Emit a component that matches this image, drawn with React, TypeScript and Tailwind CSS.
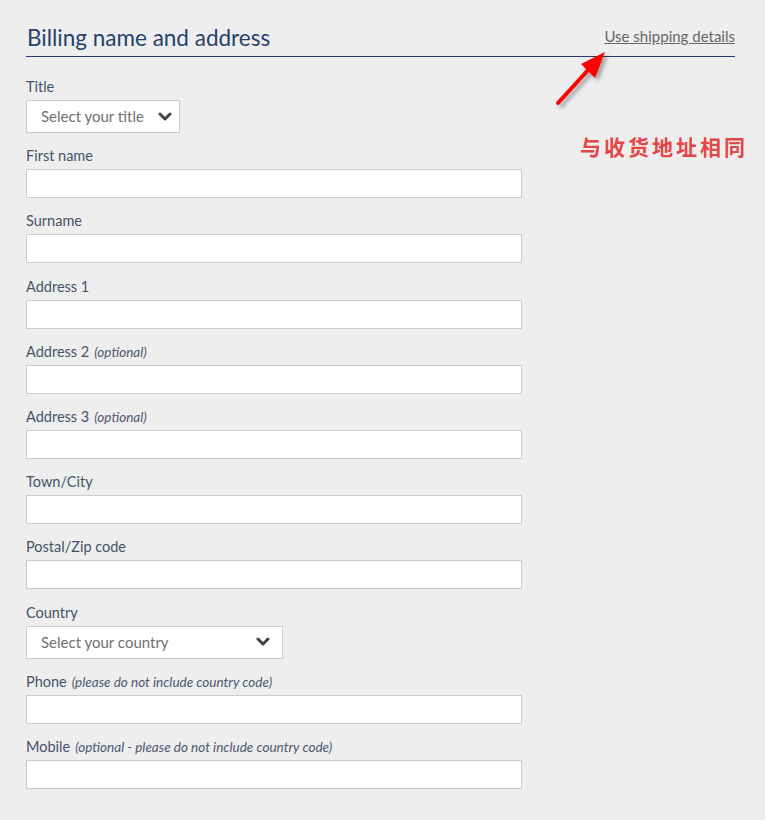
import React from 'react'

type Field = {
  label: string
  note?: string
  kind?: 'input' | 'select'
  placeholder?: string
  box?: string
}

const fields: Field[] = [
  { label: 'Title', kind: 'select', placeholder: 'Select your title', box: 'w-[154px] pr-[7px]' },
  { label: 'First name' },
  { label: 'Surname' },
  { label: 'Address 1' },
  { label: 'Address 2', note: '(optional)' },
  { label: 'Address 3', note: '(optional)' },
  { label: 'Town/City' },
  { label: 'Postal/Zip code' },
  { label: 'Country', kind: 'select', placeholder: 'Select your country', box: 'w-[257px] pr-[12px]' },
  { label: 'Phone', note: '(please do not include country code)' },
  { label: 'Mobile', note: '(optional - please do not include country code)' },
]

function Chevron() {
  return (
    <svg width="14" height="10" viewBox="0 0 14 10" className="text-[#444]">
      <polyline points="2,2 7,7 12,2" fill="none" stroke="currentColor" strokeWidth="3" strokeLinecap="round" strokeLinejoin="round" />
    </svg>
  )
}

function FormField({ f }: { f: Field }) {
  return (
    <div className="mb-[13.2px]">
      <label className="block h-5 mb-[3px] text-[14.5px] leading-5 text-[#46526a]">
        {f.label}
        {f.note && <span className="ml-[5px] text-[13.5px] italic text-[#4d5870]">{f.note}</span>}
      </label>
      {f.kind === 'select' ? (
        <div className={`${f.box} h-[33px] bg-white border border-[#cccccc] flex items-center justify-between pl-[14px]`}>
          <span className="text-[15px] text-[#707070]">{f.placeholder}</span>
          <Chevron />
        </div>
      ) : (
        <div className="w-[496px] h-[29px] bg-white border border-[#cccccc]" />
      )}
    </div>
  )
}

export default function App() {
  return (
    <div className="relative w-[765px] h-[820px] bg-[#eeeeee] overflow-hidden" style={{ fontFamily: 'Lato, "Open Sans", sans-serif' }}>
      <div className="px-[26px] pt-[24px]">
        {/* Section header */}
        <div className="w-[709px] flex items-end justify-between border-b border-[#1f3a6e] pb-[5px] mb-[20px]">
          <h2 className="text-[22.5px] leading-[27px] text-[#25416e] pl-px">Billing name and address</h2>
          <a href="#" className="text-[15px] leading-5 text-[#666] underline mb-[5px]">Use shipping details</a>
        </div>

        {fields.map(f => (
          <FormField key={f.label} f={f} />
        ))}
      </div>

      {/* annotation arrow */}
      <svg className="absolute left-[545px] top-[45px]" width="80" height="80" viewBox="0 0 80 80">
        <defs>
          <filter id="sh" x="-30%" y="-30%" width="160%" height="160%">
            <feDropShadow dx="3" dy="3" stdDeviation="2" floodColor="#000" floodOpacity="0.35" />
          </filter>
        </defs>
        <g filter="url(#sh)">
          <line x1="13" y1="58" x2="44" y2="24" stroke="#ff0000" strokeWidth="4" strokeLinecap="round" />
          <polygon points="60,7 36,19 50,33" fill="#ff0000" />
        </g>
      </svg>

      <div className="absolute left-[580px] top-[131px] text-[21px] font-bold tracking-[3px] text-[#e64545]" style={{ fontFamily: '"Noto Sans CJK SC", sans-serif' }}>
        与收货地址相同
      </div>
    </div>
  )
}
